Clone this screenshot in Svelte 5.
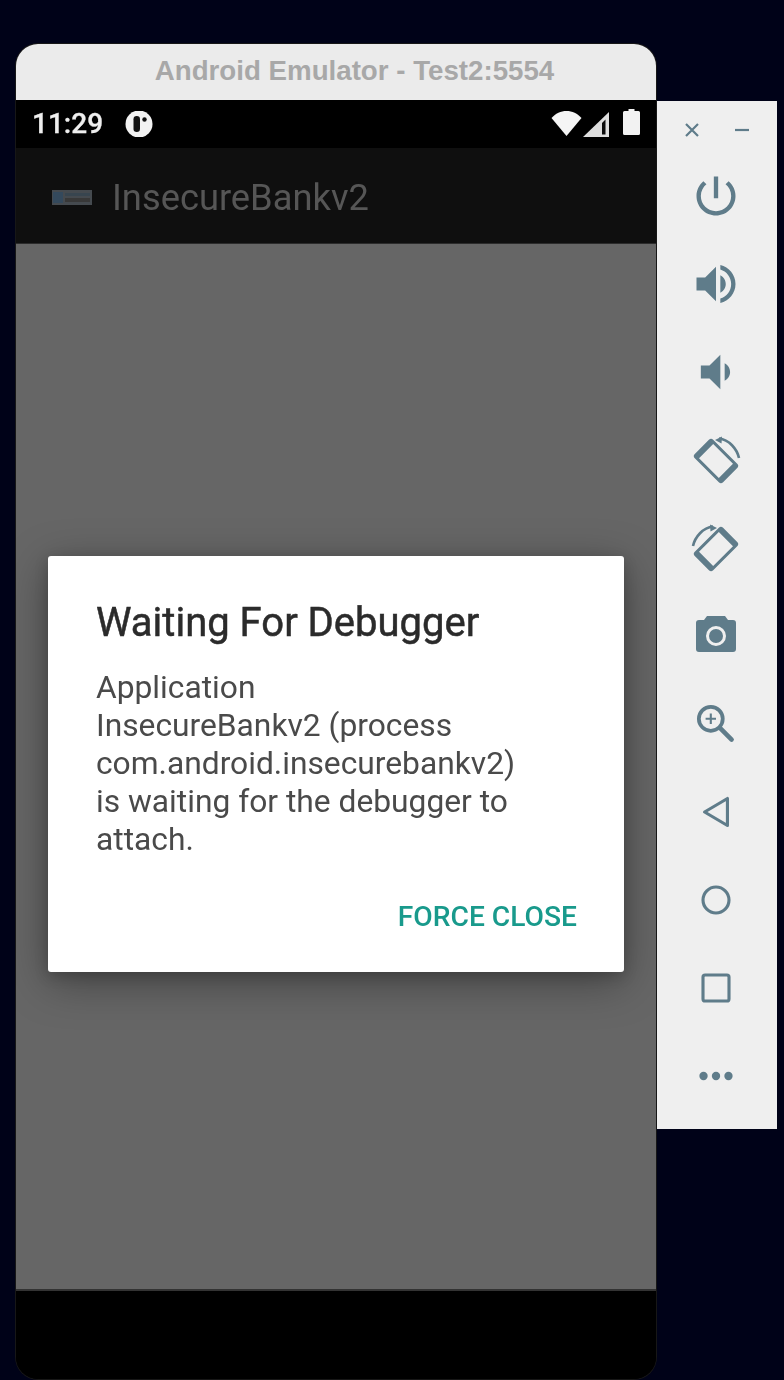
<script lang="ts">
  const lines = ["Application", "InsecureBankv2 (process", "com.android.insecurebankv2)", "is waiting for the debugger to", "attach."];
</script>

<div class="page">
  <div class="window">
    <div class="titlebar">Android Emulator - Test2:5554</div>

    <div class="statusbar">
      <span class="time">11:29</span>
      <svg class="notif" viewBox="0 0 30 26" width="30" height="26" aria-hidden="true">
        <circle cx="15" cy="13" r="13.5" fill="#f2f2f2" />
        <rect x="9.5" y="5" width="6.5" height="16" rx="3.2" fill="#111" />
        <circle cx="20.5" cy="8.5" r="2.2" fill="#111" />
      </svg>
      <span class="spacer"></span>
      <svg class="wifi" viewBox="0 0 31 25" width="31" height="25" aria-hidden="true">
        <path d="M0.5 7C4.5 2.6 9.8 0 15.5 0S26.5 2.6 30.5 7L15.5 25z" fill="#f5f5f5" />
      </svg>
      <svg class="signal" viewBox="0 0 26 25" width="26" height="25" aria-hidden="true">
        <path d="M0 25L26 0V25z" fill="#dedede" />
        <path d="M19 11L22.5 7.5V22.5H19z" fill="#0b0b0b" />
      </svg>
      <svg class="battery" viewBox="0 0 17 26" width="17" height="26" aria-hidden="true">
        <path d="M5.5 0H11.5V2H15.5Q17 2 17 3.5V24.5Q17 26 15.5 26H1.5Q0 26 0 24.5V3.5Q0 2 1.5 2H5.5z" fill="#f2f2f2" />
      </svg>
    </div>

    <div class="appbar">
      <svg viewBox="0 0 40 15" width="40" height="15" aria-hidden="true">
        <rect width="40" height="15" fill="#454a4f" />
        <rect x="1" y="2" width="10" height="11" fill="#34495c" />
        <rect x="13" y="3" width="25" height="3" fill="#38454f" />
        <rect x="13" y="8" width="25" height="4" fill="#383838" />
      </svg>
      <span>InsecureBankv2</span>
    </div>

    <div class="content">
      <div class="dialog">
        <h1>Waiting For Debugger</h1>
        <p>{#each lines as line, i}{line}{#if i < lines.length - 1}<br />{/if}{/each}</p>
        <div class="actions"><button type="button">FORCE CLOSE</button></div>
      </div>
    </div>

    <div class="navbar"></div>
  </div>

  <aside class="sidebar">
    <div class="winctl">
      <svg viewBox="0 0 14 14" width="14" height="14" aria-hidden="true"><path d="M1 1L13 13M13 1L1 13" /></svg>
      <svg viewBox="0 0 14 14" width="14" height="14" aria-hidden="true"><path d="M0 7H14" /></svg>
    </div>

    <div class="tools">
      <svg viewBox="0 0 24 24" class="fill" aria-hidden="true"><path d="M13 3h-2v10h2V3zm4.83 2.17l-1.42 1.42C17.99 7.86 19 9.81 19 12c0 3.87-3.13 7-7 7s-7-3.13-7-7c0-2.19 1.01-4.14 2.58-5.42L6.17 5.17C4.23 6.82 3 9.26 3 12c0 4.97 4.03 9 9 9s9-4.03 9-9c0-2.74-1.23-5.18-3.17-6.83z" /></svg>
      <svg viewBox="0 0 24 24" class="fill" aria-hidden="true"><path d="M3 9v6h4l5 5V4L7 9H3zm13.5 3c0-1.77-1.02-3.29-2.5-4.03v8.05c1.48-.73 2.5-2.25 2.5-4.02zM14 3.23v2.06c2.89.86 5 3.54 5 6.71s-2.11 5.85-5 6.71v2.06c4.01-.91 7-4.49 7-8.77s-2.99-7.86-7-8.77z" /></svg>
      <svg viewBox="0 0 24 24" class="fill" aria-hidden="true"><path d="M18.5 12c0-1.77-1.02-3.29-2.5-4.03v8.05c1.48-.73 2.5-2.25 2.5-4.02zM5 9v6h4l5 5V4L9 9H5z" /></svg>

      <svg viewBox="-26 -26 52 52" aria-hidden="true">
        <path class="fill" fill-rule="evenodd" transform="translate(0 1) rotate(-45)" d="M-10-20H10Q13-20 13-17V17Q13 20 10 20H-10Q-13 20-13 17V-17Q-13-20-10-20zM-10-14V14H10V-14z" />
        <path class="arc" d="M3-21.5C13-20.5 21-11 23-2" />
        <path class="fill" d="M-1-20L6-23.5L5.5-16.5z" />
      </svg>
      <svg viewBox="-26 -26 52 52" aria-hidden="true">
        <g transform="scale(-1 1)">
          <path class="fill" fill-rule="evenodd" transform="translate(0 1) rotate(-45)" d="M-10-20H10Q13-20 13-17V17Q13 20 10 20H-10Q-13 20-13 17V-17Q-13-20-10-20zM-10-14V14H10V-14z" />
          <path class="arc" d="M3-21.5C13-20.5 21-11 23-2" />
          <path class="fill" d="M-1-20L6-23.5L5.5-16.5z" />
        </g>
      </svg>

      <svg viewBox="-26 -26 52 52" class="fill" aria-hidden="true">
        <path fill-rule="evenodd" d="M-9-20H9L12-16H17Q20-16 20-13V13Q20 16 17 16H-17Q-20 16-20 13V-13Q-20-16-17-16H-12zM0-10A10 10 0 1 0 0 10A10 10 0 1 0 0-10zM0-7A7 7 0 1 1 0 7A7 7 0 1 1 0-7z" />
      </svg>

      <svg viewBox="-25 -25 50 50" aria-hidden="true">
        <circle class="line heavy" cx="-5" cy="-5" r="11.5" />
        <path class="handle" d="M4 4L15 15" />
        <path class="thin" d="M-10-5H0M-5-10V0" />
      </svg>

      <svg viewBox="-25 -25 50 50" aria-hidden="true"><path class="line" d="M-11 0L11-13V13z" /></svg>
      <svg viewBox="-25 -25 50 50" aria-hidden="true"><circle class="line" r="12.5" /></svg>
      <svg viewBox="-25 -25 50 50" aria-hidden="true"><rect class="line" x="-12.5" y="-12.5" width="25" height="25" rx="2" /></svg>
      <svg viewBox="-25 -25 50 50" class="fill" aria-hidden="true">
        <circle cx="-12" r="4" /><circle r="4" /><circle cx="12" r="4" />
      </svg>
    </div>
  </aside>
</div>

<style>
  :global(body) { margin: 0; background: #000218; }
  .page { display: flex; align-items: flex-start; width: 784px; height: 1380px; padding: 44px 0 0 16px; box-sizing: border-box; overflow: hidden; background: #000218; font-family: Roboto, sans-serif; }

  .window { display: flex; flex-direction: column; flex: 0 0 640px; height: 1335px; overflow: hidden; border-radius: 22px; background: #000; box-shadow: 0 0 0 1px #171717; }
  .titlebar { height: 56px; flex: none; display: flex; align-items: center; justify-content: center; padding: 0 0 2px 37px; box-sizing: border-box; background: #ebebeb; color: #a8a8a8; font: 700 27.7px "Liberation Sans", Arial, sans-serif; }

  .statusbar { height: 48px; flex: none; display: flex; align-items: center; padding: 0 16px; background: #000; color: #eee; }
  .time { font-size: 28px; font-weight: 500; line-height: 48px; -webkit-text-stroke: .3px #eee; filter: blur(.4px); }
  .notif { margin-left: 21px; filter: blur(.4px); }
  .spacer { flex: 1; }
  .wifi { margin-bottom: 2px; filter: blur(.4px); }
  .signal { margin: 0 0 0 1px; filter: blur(.4px); }
  .battery { margin: 0 0 4px 14px; filter: blur(.4px); }

  .appbar { height: 96px; flex: none; display: flex; align-items: center; gap: 20px; padding: 3px 0 0 36px; box-sizing: border-box; background: #0f0f0f; border-bottom: 1px solid #2c2c2c; color: #565656; font-size: 36.3px; }
  .appbar svg { filter: blur(.7px); }
  .appbar span { filter: blur(.4px); }

  .content { flex: 1; display: flex; align-items: center; justify-content: center; padding-bottom: 6px; background: #666; border-bottom: 2px solid #333; }
  .dialog { width: 576px; padding: 45px 47px 37px 48px; box-sizing: border-box; border-radius: 3px; background: #fff; box-shadow: 0 10px 44px rgba(0, 0, 0, .36), 0 4px 14px rgba(0, 0, 0, .18); }
  h1 { margin: 0 0 24px; color: #2b2b2b; font-size: 40px; font-weight: 400; -webkit-text-stroke: .5px #2b2b2b; line-height: 44px; filter: blur(.4px); }
  p { margin: 0 0 40px; color: #4a4a4a; font-size: 31.75px; line-height: 38px; filter: blur(.4px); }
  .actions { display: flex; justify-content: flex-end; }
  button { padding: 0; border: 0; background: none; color: #199a8c; font: 500 28.2px/36px Roboto, sans-serif; filter: blur(.3px); }

  .navbar { height: 88px; flex: none; background: #000; }

  .sidebar { flex: 0 0 120px; height: 1028px; margin: 57px 0 0 1px; background: #efefef; }
  .winctl { display: flex; justify-content: space-between; padding: 22px 28px 0; }
  .winctl svg { fill: none; stroke: #5f7c8a; stroke-width: 2.2; }
  .tools { display: flex; flex-direction: column; align-items: center; gap: 36px; margin-top: 33px; padding-right: 2px; }
  .tools svg { display: block; width: 52px; height: 52px; flex: none; }
  .fill { fill: #5f7c8a; }
  .line { fill: none; stroke: #5f7c8a; stroke-width: 3; stroke-linecap: round; stroke-linejoin: round; }
  .heavy { stroke-width: 3.6; }
  .handle { fill: none; stroke: #5f7c8a; stroke-width: 4.4; stroke-linecap: round; }
  .thin { fill: none; stroke: #5f7c8a; stroke-width: 2; }
  .arc { fill: none; stroke: #5f7c8a; stroke-width: 2.6; }
</style>
